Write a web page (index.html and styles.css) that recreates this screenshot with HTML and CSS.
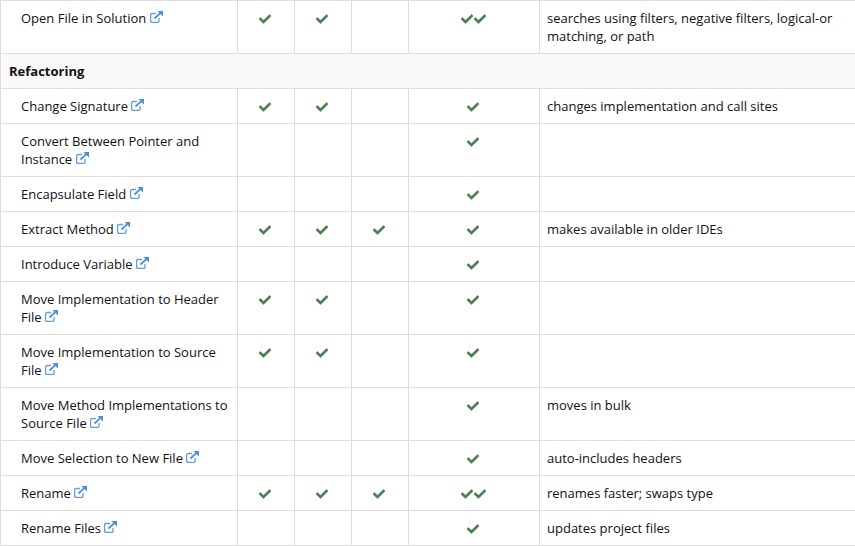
FILE: index.html
```html
<!DOCTYPE html>
<html lang="en">
<head>
<meta charset="utf-8">
<title>Feature comparison</title>
<link rel="stylesheet" href="styles.css">
</head>
<body>
<svg class="defs" width="0" height="0" aria-hidden="true">
  <symbol id="check" viewBox="0 0 512 512"><path d="M173.898 439.404l-166.4-166.4c-9.997-9.997-9.997-26.206 0-36.204l36.203-36.204c9.997-9.998 26.207-9.998 36.204 0L192 312.69 432.095 72.596c9.997-9.997 26.207-9.997 36.204 0l36.203 36.204c9.997 9.997 9.997 26.206 0 36.204l-294.4 294.401c-9.998 9.997-26.207 9.997-36.204-.001z"/></symbol>
  <symbol id="ext" viewBox="0 0 13 12"><path class="ext-box" d="M9 7V10A1.5 1.5 0 0 1 7.5 11.5H2A1.5 1.5 0 0 1 .6 10V4A1.5 1.5 0 0 1 2 2.5H6"/><path class="ext-arrow" d="M4.5 7.5L10.5 1.8"/><path class="ext-head" d="M7.5 0H13V5.5Z"/></symbol>
</svg>
<table class="matrix">
  <colgroup><col class="c-name"><col class="c-s"><col class="c-s"><col class="c-s"><col class="c-v"><col class="c-note"></colgroup>
  <tbody>
    <tr><td class="name">Open File in Solution <a class="x"><svg><use href="#ext"/></svg></a></td><td class="m"><svg class="ck"><use href="#check"/></svg></td><td class="m"><svg class="ck"><use href="#check"/></svg></td><td class="m"></td><td class="m"><svg class="ck"><use href="#check"/></svg><svg class="ck two"><use href="#check"/></svg></td><td class="note">searches using filters, negative filters, logical-or matching, or path</td></tr>
    <tr class="section"><td colspan="6">Refactoring</td></tr>
    <tr><td class="name">Change Signature <a class="x"><svg><use href="#ext"/></svg></a></td><td class="m"><svg class="ck"><use href="#check"/></svg></td><td class="m"><svg class="ck"><use href="#check"/></svg></td><td class="m"></td><td class="m"><svg class="ck"><use href="#check"/></svg></td><td class="note">changes implementation and call sites</td></tr>
    <tr><td class="name">Convert Between Pointer and Instance <a class="x"><svg><use href="#ext"/></svg></a></td><td class="m"></td><td class="m"></td><td class="m"></td><td class="m"><svg class="ck"><use href="#check"/></svg></td><td class="note"></td></tr>
    <tr><td class="name">Encapsulate Field <a class="x"><svg><use href="#ext"/></svg></a></td><td class="m"></td><td class="m"></td><td class="m"></td><td class="m"><svg class="ck"><use href="#check"/></svg></td><td class="note"></td></tr>
    <tr><td class="name">Extract Method <a class="x"><svg><use href="#ext"/></svg></a></td><td class="m"><svg class="ck"><use href="#check"/></svg></td><td class="m"><svg class="ck"><use href="#check"/></svg></td><td class="m"><svg class="ck"><use href="#check"/></svg></td><td class="m"><svg class="ck"><use href="#check"/></svg></td><td class="note">makes available in older IDEs</td></tr>
    <tr><td class="name">Introduce Variable <a class="x"><svg><use href="#ext"/></svg></a></td><td class="m"></td><td class="m"></td><td class="m"></td><td class="m"><svg class="ck"><use href="#check"/></svg></td><td class="note"></td></tr>
    <tr><td class="name">Move Implementation to Header File <a class="x"><svg><use href="#ext"/></svg></a></td><td class="m"><svg class="ck"><use href="#check"/></svg></td><td class="m"><svg class="ck"><use href="#check"/></svg></td><td class="m"></td><td class="m"><svg class="ck"><use href="#check"/></svg></td><td class="note"></td></tr>
    <tr><td class="name">Move Implementation to Source File <a class="x"><svg><use href="#ext"/></svg></a></td><td class="m"><svg class="ck"><use href="#check"/></svg></td><td class="m"><svg class="ck"><use href="#check"/></svg></td><td class="m"></td><td class="m"><svg class="ck"><use href="#check"/></svg></td><td class="note"></td></tr>
    <tr><td class="name">Move Method Implementations to Source File <a class="x"><svg><use href="#ext"/></svg></a></td><td class="m"></td><td class="m"></td><td class="m"></td><td class="m"><svg class="ck"><use href="#check"/></svg></td><td class="note">moves in bulk</td></tr>
    <tr><td class="name">Move Selection to New File <a class="x"><svg><use href="#ext"/></svg></a></td><td class="m"></td><td class="m"></td><td class="m"></td><td class="m"><svg class="ck"><use href="#check"/></svg></td><td class="note">auto-includes headers</td></tr>
    <tr><td class="name">Rename <a class="x"><svg><use href="#ext"/></svg></a></td><td class="m"><svg class="ck"><use href="#check"/></svg></td><td class="m"><svg class="ck"><use href="#check"/></svg></td><td class="m"><svg class="ck"><use href="#check"/></svg></td><td class="m"><svg class="ck"><use href="#check"/></svg><svg class="ck two"><use href="#check"/></svg></td><td class="note">renames faster; swaps type</td></tr>
    <tr><td class="name">Rename Files <a class="x"><svg><use href="#ext"/></svg></a></td><td class="m"></td><td class="m"></td><td class="m"></td><td class="m"><svg class="ck"><use href="#check"/></svg></td><td class="note">updates project files</td></tr>
  </tbody>
</table>
</body>
</html>
```
FILE: styles.css
```css
html, body { margin: 0; padding: 0; background: #fff; overflow: hidden; }
.defs { position: absolute; }
.matrix {
  border-collapse: collapse;
  table-layout: fixed;
  width: 856px;
  font: 13px/18px "Open Sans", sans-serif;
  color: #111;
}
.c-name { width: 237px; }
.c-s { width: 57px; }
.c-v { width: 131px; }
.matrix td {
  border: 1px solid #ddd;
  padding: 8px;
  vertical-align: top;
}
.matrix td.name { padding-left: 20px; }
.matrix td.note { padding-left: 7px; }
.matrix td.m { text-align: center; padding-right: 9.5px; }
.section td { background: #f9f9f9; font-weight: 700; }
.ck { width: 12px; height: 12px; fill: #4b7f52; stroke: #4b7f52; stroke-width: 16; overflow: visible; vertical-align: -1.5px; }
.ck.two { margin-left: 1px; }
.x svg { width: 13px; height: 12px; vertical-align: 0; overflow: visible; }
.ext-box { fill: none; stroke: #6a9bd8; stroke-width: 1.3; }
.ext-arrow { fill: none; stroke: #4a8fd8; stroke-width: 1.8; }
.ext-head { fill: #4a8fd8; }
```
